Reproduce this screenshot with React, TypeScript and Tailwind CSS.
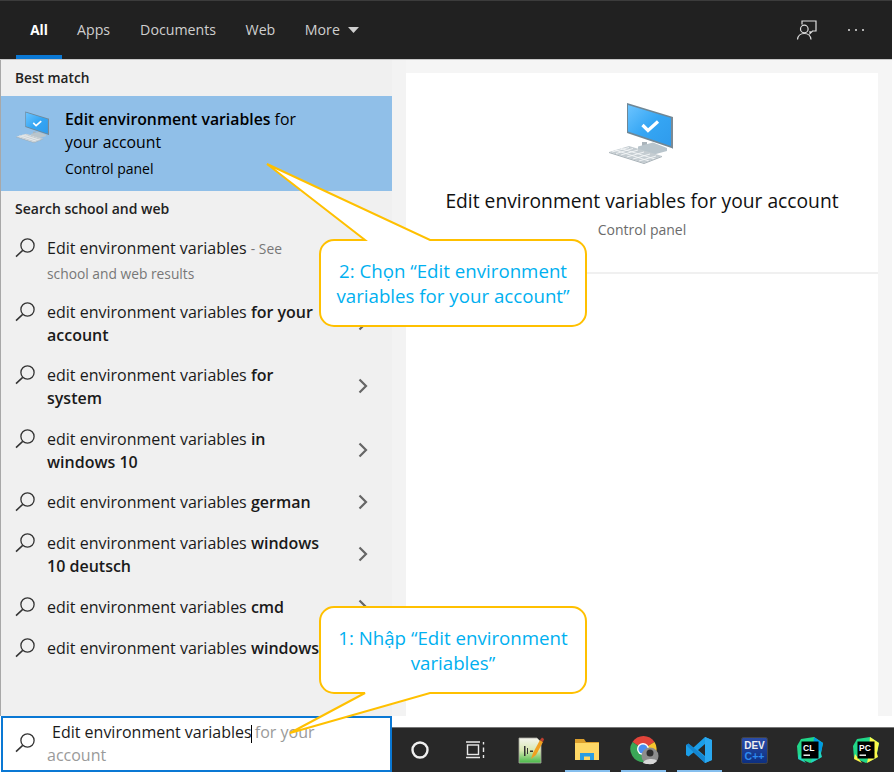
import React from "react";

const FONT = "[font-family:'Open_Sans','Noto_Sans',sans-serif]";

function SearchIcon() {
  return (
    <svg width="20" height="22" viewBox="0 0 20 22" className="shrink-0" fill="none" stroke="#333333" strokeWidth="1.3">
      <circle cx="12.5" cy="8.5" r="6.6" />
      <path d="M7.7 13.4 L1 19.6" strokeWidth="1.5" />
    </svg>
  );
}

function Chevron() {
  return (
    <svg width="10" height="16" viewBox="0 0 10 16" fill="none" stroke="#666666" strokeWidth="2.2">
      <path d="M1.5 1.5 L8 8 L1.5 14.5" />
    </svg>
  );
}

function ComputerIcon({ className }: { className: string }) {
  const id = className.includes("66") ? "big" : "small";
  return (
    <svg viewBox="0 0 66 62" className={className}>
      <defs>
        <linearGradient id={`scr-${id}`} x1="0" y1="0" x2="1" y2="1">
          <stop offset="0" stopColor="#6cc4ff" />
          <stop offset="0.5" stopColor="#35a6f4" />
          <stop offset="1" stopColor="#2f9bec" />
        </linearGradient>
      </defs>
      <path d="M33 40 L38 40 L38 46 L33 46Z" fill="#aab4bb" />
      <path d="M29 44.5 L44 40.5 L58 46 L58 49 L47 52 Q44 53 41 52 L29 47.5Z" fill="#b9c5cc" />
      <path d="M18 1 L64 15 L64 46.5 L18 31Z" fill="#6f8796" />
      <path d="M19 3 L62 16 L62 44 L19 29.5Z" fill={`url(#scr-${id})`} />
      <path d="M62 15.5 L64 15 L64 46.5 L62 45.5Z" fill="#7c8a94" />
      <path d="M33.5 23 L39 28.5 L49 19.5" fill="none" stroke="#ffffff" strokeWidth="3.2" />
      <path d="M0 50 L20 44 L53 54 L35 61Z" fill="#c4ccd1" />
      <path d="M3 50 L20 45.5 M7 51.5 L24 46.5 M12 53 L29 48 M18 55 L35 50 M24 57 L41 52 M30 59 L47 54" stroke="#f4f6f7" strokeWidth="0.9" fill="none" />
      <path d="M6 48 L40 59 M12 46.5 L46 57" stroke="#f4f6f7" strokeWidth="0.9" fill="none" />
      <path d="M0 50 L35 61 L53 54 L53 55 L35 62 L0 51Z" fill="#a5afb5" />
    </svg>
  );
}

function Callout({ className, tail, children }: { className: string; tail: string; children: React.ReactNode }) {
  return (
    <div className={`absolute w-[268px] h-[88px] flex items-center justify-center text-center text-[#00b0f0] text-[18.7px] leading-[25px] ${className}`}>
      <svg width="268" height="88" viewBox="0 0 268 88" className="absolute left-0 top-0 overflow-visible">
        <path d={tail} fill="#ffffff" stroke="#ffc000" strokeWidth="2" strokeLinejoin="miter" />
      </svg>
      <div className="relative">{children}</div>
    </div>
  );
}

type Row = { h: string; arrow: boolean; node: React.ReactNode };
const rows: Row[] = [
  {
    h: "h-[64px]",
    arrow: false,
    node: (
      <>
        Edit environment variables <span className="text-[13.8px] text-[#777777]">- See</span>
        <br />
        <span className="text-[13.8px] leading-[27px] text-[#777777]">school and web results</span>
      </>
    ),
  },
  { h: "h-[63px]", arrow: true, node: <>edit environment variables <b className="font-semibold">for your</b><br /><b className="font-semibold">account</b></> },
  { h: "h-[64px]", arrow: true, node: <>edit environment variables <b className="font-semibold">for</b><br /><b className="font-semibold">system</b></> },
  { h: "h-[63px]", arrow: true, node: <>edit environment variables <b className="font-semibold">in</b><br /><b className="font-semibold">windows 10</b></> },
  { h: "h-[41px]", arrow: true, node: <>edit environment variables <b className="font-semibold">german</b></> },
  { h: "h-[64px]", arrow: true, node: <>edit environment variables <b className="font-semibold">windows</b><br /><b className="font-semibold">10 deutsch</b></> },
  { h: "h-[41px]", arrow: true, node: <>edit environment variables <b className="font-semibold">cmd</b></> },
  { h: "h-[41px]", arrow: false, node: <>edit environment variables <b className="font-semibold">windows</b></> },
];

function Tile({ bar, children }: { bar?: boolean; children: React.ReactNode }) {
  return (
    <div className="relative w-[55.8px] h-full flex items-center justify-center shrink-0">
      {children}
      {bar && <div className="absolute bottom-0 left-[6px] w-[45px] h-[2px] bg-[#86bfee]" />}
    </div>
  );
}

function JetIcon({ label, a, b, c }: { label: string; a: string; b: string; c: string }) {
  return (
    <svg width="28" height="28" viewBox="0 0 28 28">
      <path d="M5 3 L18 1 L27 7 L24 22 L14 27 L2 22 L1 10Z" fill={a} />
      <path d="M18 1 L27 7 L25 17 L17 12Z" fill={b} />
      <path d="M3 18 L10 27 L2 23Z M15 27 L26 21 L24 14 L16 22Z" fill={c} />
      <rect x="5.5" y="5.5" width="17" height="17" fill="#000000" />
      <text x="7" y="14.5" fontSize="8.5" fontWeight="700" fill="#ffffff" fontFamily="'Liberation Sans',sans-serif">{label}</text>
      <rect x="7.5" y="18.5" width="6.5" height="1.4" fill="#ffffff" />
    </svg>
  );
}

export default function App() {
  return (
    <div className={`relative w-[894px] h-[772px] bg-white flex flex-col overflow-hidden ${FONT}`}>
      <header className="h-[60px] w-[892px] shrink-0 bg-[#212121] border-t border-t-[#3c3c3c] border-b border-b-[#c8c8c8] flex items-stretch justify-between text-[14.2px] text-[#cfcfcf]">
        <nav className="flex items-stretch pl-[16px]">
          <div className="relative w-[46px] flex items-center justify-center text-[13.6px] font-bold text-white">
            All
            <div className="absolute left-0 right-0 bottom-0 h-[4px] bg-[#0a78d4]" />
          </div>
          <div className="px-[15px] flex items-center">Apps</div>
          <div className="px-[15px] flex items-center">Documents</div>
          <div className="px-[14.5px] flex items-center">Web</div>
          <div className="pl-[15px] flex items-center gap-[8px]">
            More
            <svg width="11" height="6" viewBox="0 0 11 6"><path d="M0 0 H11 L5.5 6Z" fill="#cfcfcf" /></svg>
          </div>
        </nav>
        <div className="flex items-center pr-[28px] gap-[30px]">
          <svg width="22" height="22" viewBox="0 0 22 22" fill="none" stroke="#e0e0e0" strokeWidth="1.2">
            <path d="M6 5.5 V2 H20 V12 H16.5 L14 14.5 V12" />
            <circle cx="8.3" cy="10" r="3.8" />
            <path d="M1.5 20.5 C2 16 5 14.5 8.3 14.5 C11.5 14.5 14.5 16 15 20.5" />
          </svg>
          <div className="flex gap-[4.5px]">
            <div className="w-[2.5px] h-[2.5px] rounded-full bg-[#e0e0e0]" />
            <div className="w-[2.5px] h-[2.5px] rounded-full bg-[#e0e0e0]" />
            <div className="w-[2.5px] h-[2.5px] rounded-full bg-[#e0e0e0]" />
          </div>
        </div>
      </header>

      <main className="h-[656px] w-[892px] shrink-0 flex">
        <section className="w-[392px] shrink-0 bg-[#f0f0f0] border-l border-l-[#a8a8a8] text-[#1a1a1a]">
          <div className="h-[36px] pl-[14px] flex items-center text-[13.7px] font-semibold text-[#222222]">Best match</div>
          <div className="h-[95px] bg-[#90bfe8] flex text-black">
            <div className="w-[64px] shrink-0 pl-[15px] pt-[15px]">
              <ComputerIcon className="w-[34px] h-[32px]" />
            </div>
            <div className="pt-[12px] text-[15.8px] leading-[23px]">
              <span className="font-semibold">Edit environment variables</span> for
              <br />
              your account
              <div className="text-[14px] leading-[23px] mt-[3px]">Control panel</div>
            </div>
          </div>
          <div className="h-[36px] pl-[14px] pb-[2px] flex items-center text-[14px] font-semibold text-[#222222]">Search school and web</div>
          <div>
            {rows.map((r, i) => (
              <div key={i} className={`relative ${r.h} pt-[9.5px] pl-[14px] flex gap-[12px] text-[16px] leading-[23px] whitespace-nowrap`}>
                <SearchIcon />
                <div>{r.node}</div>
                {r.arrow && (
                  <div className="absolute left-[357px] top-0 bottom-0 flex items-center">
                    <Chevron />
                  </div>
                )}
              </div>
            ))}
          </div>
        </section>
        <div className="w-[14px] shrink-0 bg-[#f3f3f3]" />
        <section className="flex-1 bg-[#f5f5f5] pt-[13px] pr-[14px]">
          <div className="h-full bg-white flex flex-col">
            <div className="h-[201px] shrink-0 flex flex-col items-center border-b-2 border-b-[#f0f0f0]">
              <ComputerIcon className="w-[66px] h-[62px] mt-[29px]" />
              <div className="mt-[23px] text-[19.25px] leading-[28px] text-[#111111]">Edit environment variables for your account</div>
              <div className="mt-[3px] text-[14px] leading-[24px] text-[#6b6b6b]">Control panel</div>
            </div>
          </div>
        </section>
      </main>

      <footer className="flex-1 flex items-stretch">
        <div className="w-[391px] ml-[1px] shrink-0 bg-white border-2 border-[#0a78d4] pl-[12px] flex gap-[12px] pt-[14px]">
          <SearchIcon />
          <div className="-mt-[11px] text-[16px] leading-[23px] text-[#1a1a1a] whitespace-nowrap">
            <span className="pl-[5px]">Edit environment variables</span>
            <span className="inline-block w-[1px] h-[18px] -ml-[1px] bg-black align-middle" />
            <span className="text-[#9a9a9a] -ml-[1px]"> for your</span>
            <br />
            <span className="text-[#9a9a9a]">account</span>
          </div>
        </div>
        <div className="flex-1 flex flex-col justify-end">
          <div className="h-[45px] bg-[#282828] border-t border-t-[#777777] flex items-stretch">
            <Tile>
              <svg width="20" height="20" viewBox="0 0 20 20"><circle cx="10" cy="10" r="7.5" fill="none" stroke="#f0f0f0" strokeWidth="2.4" /></svg>
            </Tile>
            <Tile>
              <svg width="20" height="20" viewBox="0 0 20 20" fill="none" stroke="#e8e8e8" strokeWidth="1.4">
                <rect x="1.5" y="5" width="11" height="9.5" />
                <path d="M0 2 H14 M0 17.5 H14 M17.5 2 V4.5 M17.5 7.5 V12 M17.5 15 V18" />
              </svg>
            </Tile>
            <Tile>
              <svg width="26" height="27" viewBox="0 0 26 27">
                <defs>
                  <linearGradient id="np" x1="0" y1="0" x2="0" y2="1">
                    <stop offset="0" stopColor="#f4f4ee" />
                    <stop offset="0.5" stopColor="#d8e8b0" />
                    <stop offset="1" stopColor="#46b848" />
                  </linearGradient>
                </defs>
                <path d="M1 1 H19 L23 5 V26 H1Z" fill="url(#np)" stroke="#a8a8a0" strokeWidth="0.8" />
                <path d="M6 9 H7.5 V19 H6Z M9 11 H10 V17 H9Z M12 13.5 H15 V15 H12Z" fill="#333333" />
                <path d="M13 22 L15 16 L22 3 L25 5 L18 18Z" fill="#f0a020" />
                <path d="M22 3 L24 0.5 L26 2 L25 5Z" fill="#c04030" />
              </svg>
            </Tile>
            <Tile bar>
              <svg width="26" height="22" viewBox="0 0 26 22">
                <path d="M1 0 H10 L12 3 H25 V7 H1Z" fill="#dc9f2c" />
                <rect x="1" y="4" width="24" height="17" fill="#ffd866" />
                <path d="M6 21 V14 H20 V21 H16 V17.5 H10 V21Z" fill="#2a9de2" />
              </svg>
            </Tile>
            <Tile bar>
              <svg width="30" height="30" viewBox="0 0 30 30" className="ml-[2px]">
                <path d="M14 14 L3.5 7 A13 13 0 0 1 25.5 7Z" fill="#e2443a" />
                <path d="M14 14 L25.5 7 A13 13 0 0 1 16 27Z" fill="#f7c52e" />
                <path d="M14 14 L16 27 A13 13 0 0 1 3.5 7Z" fill="#3aa757" />
                <circle cx="14" cy="14" r="6" fill="#ffffff" />
                <circle cx="14" cy="14" r="4.6" fill="#4a8ff0" />
                <circle cx="21" cy="21" r="8.5" fill="#8d8d8d" />
                <circle cx="21" cy="18" r="3.5" fill="#2e2e2e" />
                <path d="M14 28 C15 23 27 23 28 26 L24 29 H17Z" fill="#d8d8d8" />
              </svg>
            </Tile>
            <Tile bar>
              <svg width="28" height="28" viewBox="0 0 28 28">
                <path d="M20 1 L27 4 V24 L20 27 L8.5 16.5 L3.5 20.5 L1 19 V9 L3.5 7.5 L8.5 11.5Z M20 8 L13 14 L20 20Z" fill="#1b9ee8" fillRule="evenodd" />
                <path d="M20 1 L27 4 V24 L20 27Z M20 20 V8 L20 20Z" fill="#2aa8f0" />
                <path d="M3.5 7.5 L20 21 L20 27 L1 9Z" fill="#0f72bd" opacity="0.55" />
              </svg>
            </Tile>
            <Tile>
              <svg width="27" height="27" viewBox="0 0 27 27">
                <defs>
                  <linearGradient id="dev" x1="0" y1="0" x2="0" y2="1">
                    <stop offset="0" stopColor="#2b4da8" />
                    <stop offset="1" stopColor="#0c2f80" />
                  </linearGradient>
                </defs>
                <rect x="0.5" y="0.5" width="26" height="26" rx="2" fill="url(#dev)" stroke="#444444" />
                <text x="13.5" y="11.5" textAnchor="middle" fontSize="10" fontWeight="700" fill="#f0f0f0" fontFamily="'Liberation Sans',sans-serif">DEV</text>
                <text x="13.5" y="22.5" textAnchor="middle" fontSize="10.5" fontWeight="700" fill="#2d8cf0" fontFamily="'Liberation Sans',sans-serif">C++</text>
              </svg>
            </Tile>
            <Tile><JetIcon label="CL" a="#21d789" b="#009ae5" c="#22d6c0" /></Tile>
            <Tile><JetIcon label="PC" a="#21d789" b="#fcf84a" c="#fcf84a" /></Tile>
          </div>
        </div>
      </footer>

      <Callout
        className="left-[319px] top-[239px]"
        tail="M15 1 H46 L-52 -75 L111 1 H253 A14 14 0 0 1 267 15 V73 A14 14 0 0 1 253 87 H15 A14 14 0 0 1 1 73 V15 A14 14 0 0 1 15 1Z"
      >
        2: Chọn “Edit environment
        <br />
        variables for your account”
      </Callout>
      <Callout
        className="left-[319px] top-[606px]"
        tail="M15 1 H253 A14 14 0 0 1 267 15 V73 A14 14 0 0 1 253 87 H111 L-29 127 L46 87 H15 A14 14 0 0 1 1 73 V15 A14 14 0 0 1 15 1Z"
      >
        1: Nhập “Edit environment
        <br />
        variables”
      </Callout>
    </div>
  );
}
